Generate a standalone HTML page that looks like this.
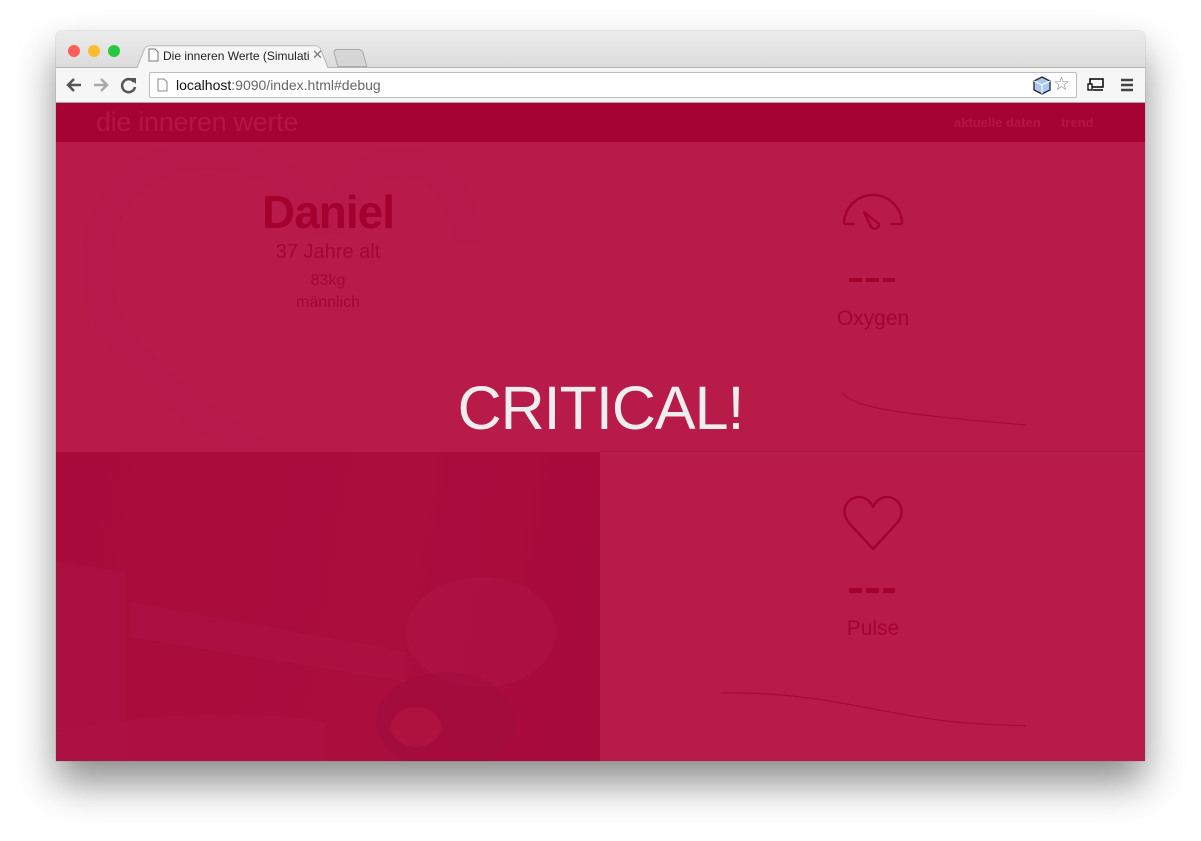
<!DOCTYPE html>
<html><head><meta charset="utf-8"><style>
*{margin:0;padding:0;box-sizing:border-box}
body{width:1201px;height:841px;background:#fff;position:relative;overflow:hidden;font-family:"Liberation Sans",sans-serif}
.win{position:absolute;left:56px;top:31px;width:1089px;height:730px;border-radius:5px 5px 0 0;overflow:hidden;box-shadow:0 22px 40px rgba(0,0,0,.45),0 0 1px rgba(0,0,0,.4)}
.tabs{position:absolute;left:0;top:0;width:100%;height:37px;background:linear-gradient(#ececec,#dcdcdc);border-bottom:1px solid #b5b5b5}
.dot{position:absolute;top:14px;width:12px;height:12px;border-radius:50%}
.tab{position:absolute;left:80px;top:11px;width:193px;height:27px;background:#f6f6f6;border:1px solid #b0b0b0;border-bottom:none;border-radius:5px 5px 0 0;transform:perspective(60px) rotateX(14deg);transform-origin:bottom}
.tabt{position:absolute;left:107px;top:18px;font-size:12px;color:#222}
.tb{position:absolute;left:0;top:37px;width:100%;height:35px;background:#f6f6f6;border-bottom:1px solid #aaa}
.url{position:absolute;left:93px;top:4px;width:928px;height:26px;background:#fff;border:1px solid #bdbdbd;border-radius:2px}
.url span{position:absolute;left:26px;top:4px;font-size:14px;color:#666}
.page{position:absolute;left:0;top:72px;width:1089px;height:658px;background:#b81a4a}
.hdr{position:absolute;left:0;top:0;width:100%;height:39px;background:#a50334}
.logo{position:absolute;left:40px;top:4px;font-size:27px;color:#b31544;letter-spacing:-0.3px}
.nav{position:absolute;top:12px;font-size:13px;font-weight:bold;color:#b31544}
.dk{color:#a3002e}
.c{position:absolute;text-align:center}
</style></head><body>
<div class="win">
 <div class="tabs">
  <div class="dot" style="left:12px;background:#fc5f57"></div>
  <div class="dot" style="left:32px;background:#fdbb2e"></div>
  <div class="dot" style="left:52px;background:#28c840"></div>
  <div class="tab"></div>
  <svg style="position:absolute;left:92px;top:17px" width="11" height="14"><path d="M1 1H7L10 4V13H1Z" fill="#fff" stroke="#777"/></svg>
  <div class="tabt">Die inneren Werte (Simulati</div>
  <div style="position:absolute;left:256px;top:16px;font-size:13px;color:#777">✕</div>
  <div style="position:absolute;left:279px;top:18px;width:30px;height:18px;background:#d6d6d6;border:1px solid #aaa;border-radius:4px 4px 0 0;transform:skewX(15deg)"></div>
 </div>
 <div class="tb">
  <svg style="position:absolute;left:9px;top:9px" width="18" height="16"><path d="M16 8H3M9 2L3 8L9 14" fill="none" stroke="#555" stroke-width="2.5"/></svg>
  <svg style="position:absolute;left:36px;top:9px" width="18" height="16"><path d="M2 8H15M9 2L15 8L9 14" fill="none" stroke="#aaa" stroke-width="2.5"/></svg>
  <svg style="position:absolute;left:64px;top:8px" width="18" height="18"><path d="M14 6A6.5 6.5 0 1 0 15 11" fill="none" stroke="#555" stroke-width="2.5"/><path d="M10 2H16V8Z" fill="#555"/></svg>
  <div class="url"><svg style="position:absolute;left:7px;top:5px" width="11" height="14"><path d="M1 1H7L10 4V13H1Z" fill="#fff" stroke="#888"/></svg><span><b style="font-weight:normal;color:#111">localhost</b>:9090/index.html#debug</span>
   <svg style="position:absolute;left:883px;top:3px" width="18" height="19"><path d="M9 1L17 5V14L9 18L1 14V5Z" fill="#a9c9ee" stroke="#223" stroke-width="1.3"/><path d="M1 5L9 9L17 5M9 9V18" fill="none" stroke="#fff"/></svg>
   <div style="position:absolute;left:903px;top:0;font-size:19px;color:#888">☆</div>
  </div>
  <svg style="position:absolute;left:1031px;top:10px" width="18" height="14"><rect x="3" y="1" width="13" height="8" fill="none" stroke="#000" stroke-width="1.5"/><rect x="1" y="6" width="4" height="6" fill="#fff" stroke="#000" stroke-width="1.3"/><path d="M6 12H16" stroke="#000" stroke-width="1.5"/></svg>
  <svg style="position:absolute;left:1064px;top:10px" width="14" height="14"><path d="M1 2H13M1 7H13M1 12H13" stroke="#444" stroke-width="2.5"/></svg>
 </div>
 <div class="page">
  <div class="hdr"><div class="logo">die inneren werte</div>
   <div class="nav" style="left:898px">aktuelle daten</div><div class="nav" style="left:1005px">trend</div></div>
  <svg style="position:absolute;left:0;top:39px" width="545" height="310"><path d="M272 90C230 -20 40 -20 40 130C40 200 120 260 200 310M272 90C310 -20 410 10 410 100" fill="none" stroke="#b41849" stroke-width="30" opacity=".5"/></svg>
  <div class="c dk" style="left:172px;width:200px;top:82px;font-size:46px;font-weight:bold;letter-spacing:-1px">Daniel</div>
  <div class="c dk" style="left:172px;width:200px;top:138px;font-size:20px;opacity:.8">37 Jahre alt</div>
  <div class="c dk" style="left:172px;width:200px;top:169px;font-size:16px;opacity:.8">83kg</div>
  <div class="c dk" style="left:172px;width:200px;top:191px;font-size:16px;opacity:.8">männlich</div>
  <div style="position:absolute;left:0;top:349px;width:544px;height:309px;background:linear-gradient(100deg,#a90b3c 0%,#ab0d3d 60%,#a80c3c 100%)"></div>
  <svg style="position:absolute;left:0;top:349px" width="544" height="309">
   <path d="M0 110L70 120L70 309H0Z" fill="#b0164a" opacity=".4"/>
   <path d="M75 150L350 200L350 230L75 185Z" fill="#b0164a" opacity=".35"/>
   <path d="M0 280Q150 250 270 270L270 309H0Z" fill="#b01545" opacity=".4"/>
   <ellipse cx="425" cy="180" rx="75" ry="55" fill="#b0164a" opacity=".45"/>
   <ellipse cx="390" cy="270" rx="70" ry="50" fill="#9f0c40" opacity=".5"/>
   <ellipse cx="360" cy="275" rx="25" ry="20" fill="#b3163f" opacity=".7"/>
  </svg>
  <div style="position:absolute;left:544px;top:348px;width:545px;height:1px;background:#b0154a"></div>
  <svg style="position:absolute;left:785px;top:84px" width="64" height="48"><path d="M3 37A29 29 0 0 1 61 37M3 37H14M50 37H61M23 25L30 40A4.5 4.5 0 0 0 38 37Z" fill="none" stroke="#a3002e" stroke-width="2.3" stroke-linejoin="round"/></svg>
  <div style="position:absolute;left:793px;top:175px;width:46px;height:4px;background:repeating-linear-gradient(90deg,#a3002e 0 13px,transparent 13px 17px)"></div>
  <div class="c dk" style="left:717px;width:200px;top:204px;font-size:21px;opacity:.85">Oxygen</div>
  <svg style="position:absolute;left:780px;top:285px" width="200" height="40"><path d="M6 5C20 20 60 26 190 37" fill="none" stroke="#a60a3c" stroke-width="1.2"/></svg>
  <svg style="position:absolute;left:785px;top:390px" width="64" height="60"><path d="M32 56L8 30C-2 18 6 4 18 4C26 4 30 10 32 14C34 10 38 4 46 4C58 4 66 18 56 30Z" fill="none" stroke="#a3002e" stroke-width="2.3" stroke-linejoin="round"/></svg>
  <div style="position:absolute;left:793px;top:485px;width:46px;height:5px;background:repeating-linear-gradient(90deg,#a3002e 0 13px,transparent 13px 17px)"></div>
  <div class="c dk" style="left:717px;width:200px;top:514px;font-size:21px;opacity:.85">Pulse</div>
  <svg style="position:absolute;left:660px;top:580px" width="320" height="50"><path d="M5 10C100 8 160 30 230 38C260 42 300 42 310 43" fill="none" stroke="#a60a3c" stroke-width="1.2"/></svg>
  <div class="c" style="left:0;width:1089px;top:270px;font-size:61px;color:#eeeeee;letter-spacing:-1px">CRITICAL!</div>
 </div>
</div>
</body></html>
